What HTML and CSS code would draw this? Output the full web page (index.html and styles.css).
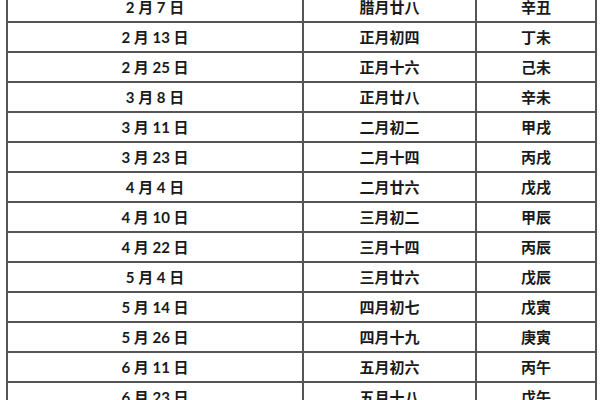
FILE: index.html
```html
<!DOCTYPE html>
<html lang="zh-CN">
<head>
<meta charset="utf-8">
<link rel="stylesheet" href="styles.css">
</head>
<body>
<table class="cal">
  <colgroup>
    <col class="c1"><col class="c2"><col class="c3">
  </colgroup>
  <tbody>
    <tr><td>2 月 7 日</td><td>腊月廿八</td><td>辛丑</td></tr>
    <tr><td>2 月 13 日</td><td>正月初四</td><td>丁未</td></tr>
    <tr><td>2 月 25 日</td><td>正月十六</td><td>己未</td></tr>
    <tr><td>3 月 8 日</td><td>正月廿八</td><td>辛未</td></tr>
    <tr><td>3 月 11 日</td><td>二月初二</td><td>甲戌</td></tr>
    <tr><td>3 月 23 日</td><td>二月十四</td><td>丙戌</td></tr>
    <tr><td>4 月 4 日</td><td>二月廿六</td><td>戊戌</td></tr>
    <tr><td>4 月 10 日</td><td>三月初二</td><td>甲辰</td></tr>
    <tr><td>4 月 22 日</td><td>三月十四</td><td>丙辰</td></tr>
    <tr><td>5 月 4 日</td><td>三月廿六</td><td>戊辰</td></tr>
    <tr><td>5 月 14 日</td><td>四月初七</td><td>戊寅</td></tr>
    <tr><td>5 月 26 日</td><td>四月十九</td><td>庚寅</td></tr>
    <tr><td>6 月 11 日</td><td>五月初六</td><td>丙午</td></tr>
    <tr><td>6 月 23 日</td><td>五月十八</td><td>戊午</td></tr>
  </tbody>
</table>
</body>
</html>
```

FILE: styles.css
```css
html, body {
  margin: 0;
  padding: 0;
  background: #fff;
  overflow: hidden;
  height: 400px;
}
.cal {
  border-collapse: collapse;
  margin: -9px 0 0 6px;
  width: 589px;
  table-layout: fixed;
  font-family: Lato, "Noto Sans CJK SC", sans-serif;
  font-weight: 700;
  font-size: 15px;
  color: #1a1a1a;
}
.c1 { width: 296px; }
.c2 { width: 173px; }
.c3 { width: 120px; }
.cal td {
  border: 2px solid #555;
  height: 28px;
  padding: 0;
  text-align: center;
  vertical-align: middle;
  line-height: 20px;
}
```
